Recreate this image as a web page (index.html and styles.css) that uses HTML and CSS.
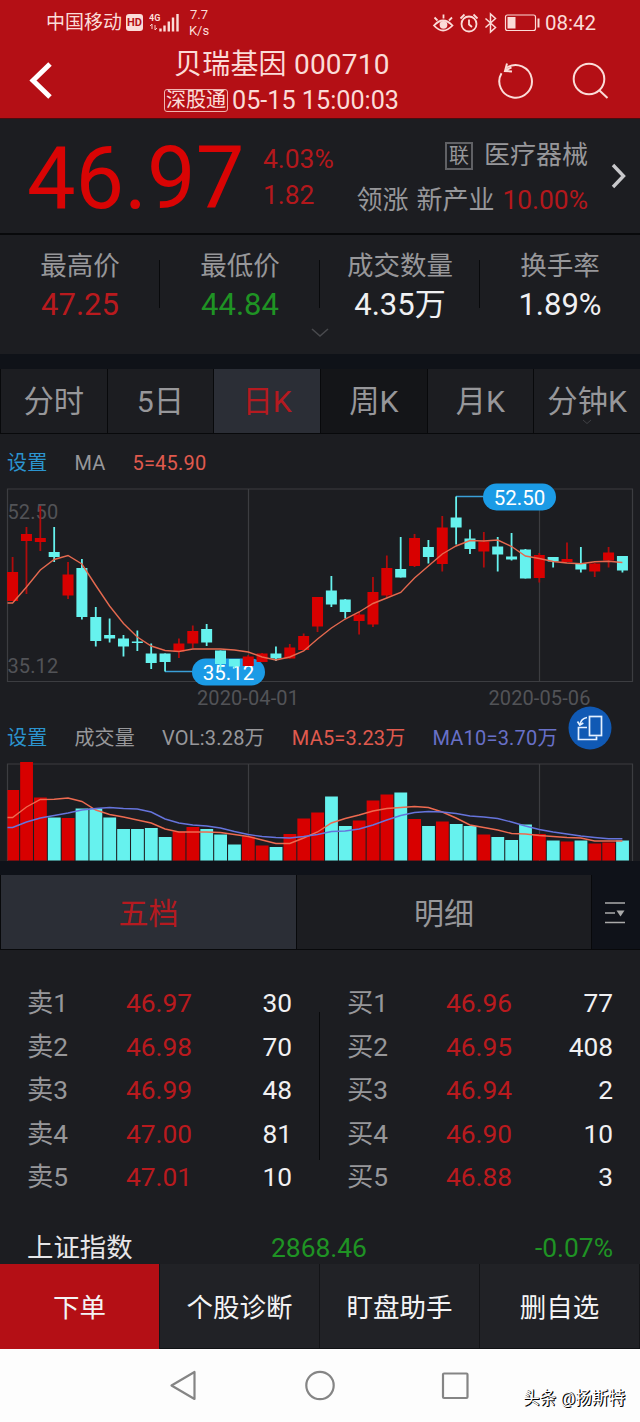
FILE: index.html
```html
<!DOCTYPE html>
<html lang="zh-CN">
<head>
    <meta charset="UTF-8">
    <meta name="viewport" content="width=device-width, initial-scale=1.0">
    <title>贝瑞基因 000710</title>
    <link rel="stylesheet" href="styles.css">
</head>
<body>
    <header class="header">
        <!-- 系统状态栏 -->
        <div class="status">
            <span class="carrier">中国移动</span>
            <span class="hd">HD</span>
            <svg class="signal" width="30" height="22" viewBox="0 0 30 22">
                <text x="0" y="9" class="net">4G</text>
                <path d="M3 12v5M1 14l2-2M6 18v-5M8 16l-2 2" stroke="#f6cfcb" stroke-width="1" fill="none"/>
                <path d="M11.5 19.5v-3M15.5 19.5v-6M19.8 19.5v-10M24 19.5v-14M28.5 19.5v-17.5" stroke="#fbdcd8" stroke-width="2.4" fill="none"/>
            </svg>
            <span class="speed">7.7<br>K/s</span>
            <svg class="sys-icons" width="108" height="24" viewBox="432 10 108 24" fill="none" stroke="#fbdcd8" stroke-width="1.8">
                <path d="M434 24.5Q443 14.5 452.5 24.5Q443 34.5 434 24.5zM434.5 16.5l3 3M443.5 13.5v4M452 16.5l-3 3"/>
                <circle cx="443.5" cy="23.8" r="3" fill="#fbdcd8"/>
                <circle cx="469" cy="23" r="7.5"/>
                <path d="M469 18.5v5l3 2.5M460.5 17.500l4-4M477.5 17.5l-4-4"/>
                <path d="M485.5 17.5l10 9-5 4.5v-18l5 4.5-10 9" stroke-width="1.5"/>
                <rect x="505.5" y="14" width="30" height="15.5" rx="2" stroke-width="1.2"/>
                <rect x="507.5" y="16" width="8" height="11.5" fill="#fbdcd8" stroke="none"/>
                <path d="M538.5 17.5v9" stroke-width="2"/>
            </svg>
            <span class="clock">08:42</span>
        </div>
        <div class="nav">
            <svg width="52" height="60" viewBox="0 50 52 60" fill="none">
                <path d="M50 64L33 80.500L50 97" stroke="#fff" stroke-width="5"/>
            </svg>
            <div class="title">
                <h1>贝瑞基因 000710</h1>
                <p><span class="tag">深股通</span>05-15 15:00:03</p>
            </div>
            <svg width="120" height="60" viewBox="492 50 120 60" fill="none" stroke="#fbdcd8" stroke-width="2">
                <path d="M501.5 73.2A16.3 16.3 0 1 0 507 67.5"/>
                <path d="M511.5 67.3L506 70M507 63.5l-2 7.500 7 .5"/>
                <circle cx="589" cy="79" r="15.3"/>
                <path d="M599.5 90.5l8 7.5"/>
            </svg>
        </div>
    </header>

    <section class="quote">
        <div class="price">46.97</div>
        <div class="change">4.03%<br>1.82</div>
        <div class="sector">
            <p><span class="link-tag">联</span>医疗器械</p>
            <p>领涨 新产业 <em>10.00%</em></p>
        </div>
        <svg class="more" width="18" height="28" viewBox="0 0 18 28"><path d="M3 3l10.500 11L3 25" fill="none" stroke="#c8c8cb" stroke-width="3.4"/></svg>
    </section>

    <section class="stats">
        <div><span>最高价</span><b class="up">47.25</b></div>
        <div><span>最低价</span><b class="down">44.84</b></div>
        <div><span>成交数量</span><b>4.35万</b></div>
        <div><span>换手率</span><b>1.89%</b></div>
        <svg class="expand" width="20" height="12" viewBox="0 0 20 12"><path d="M2 2l8 7 8-7" fill="none" stroke="#48494d" stroke-width="1.6"/></svg>
    </section>

    <nav class="periods">
        <span>分时</span>
        <span>5日</span>
        <span class="active">日K</span>
        <span class="dark">周K</span>
        <span>月K</span>
        <span>分钟K<svg class="caret" width="10" height="6" viewBox="0 0 10 6"><path d="M1 1l4 3.500 4-3.500" fill="none" stroke="#404145"/></svg></span>
    </nav>

    <section class="chart">
        <div class="legend">
            <span class="set">设置</span><span>MA</span><span class="ma5">5=45.90</span>
        </div>
        <svg id="kline" width="640" height="232" viewBox="0 480 640 232"></svg>
        <div class="legend vol">
            <span class="set">设置</span><span>成交量</span><span>VOL:3.28万</span><span class="ma5">MA5=3.23万</span><span class="ma10">MA10=3.70万</span>
            <!-- 横屏切换 -->
            <svg class="rotate" width="44" height="44" viewBox="0 0 44 44" fill="none" stroke="#e4f0ff" stroke-width="1.7">
                <circle cx="22" cy="22" r="21.5" fill="#1059b4" stroke="none"/>
                <rect x="21.5" y="10.5" width="12" height="19"/>
                <path d="M19 21.5h-8.500v12h18v-3M12 18.5q1-6 7-7"/>
                <path d="M9.5 15.5l2.300 3.500 3.500-2"/>
            </svg>
        </div>
        <svg id="volume" width="640" height="101" viewBox="0 760 640 101"></svg>
    </section>

    <nav class="tabs">
        <span class="active">五档</span>
        <span>明细</span>
        <svg width="46" height="74" viewBox="0 0 46 74" stroke="#aaa" stroke-width="1.7">
            <path d="M13 28h20M13 38h10M13 47.5h20"/>
            <path d="M24.500 35.500h8l-4 6z" fill="#aaa" stroke="none"/>
        </svg>
    </nav>

    <section class="book">
        <div class="side">
            <div class="row"><span>卖1</span><i>46.97</i><b>30</b></div>
            <div class="row"><span>卖2</span><i>46.98</i><b>70</b></div>
            <div class="row"><span>卖3</span><i>46.99</i><b>48</b></div>
            <div class="row"><span>卖4</span><i>47.00</i><b>81</b></div>
            <div class="row"><span>卖5</span><i>47.01</i><b>10</b></div>
        </div>
        <div class="side">
            <div class="row"><span>买1</span><i>46.96</i><b>77</b></div>
            <div class="row"><span>买2</span><i>46.95</i><b>408</b></div>
            <div class="row"><span>买3</span><i>46.94</i><b>2</b></div>
            <div class="row"><span>买4</span><i>46.90</i><b>10</b></div>
            <div class="row"><span>买5</span><i>46.88</i><b>3</b></div>
        </div>
    </section>

    <div class="index">
        <span>上证指数</span><span class="down">2868.46</span><span class="down">-0.07%</span>
    </div>

    <footer class="actions">
        <span class="order">下单</span>
        <span>个股诊断</span>
        <span>盯盘助手</span>
        <span>删自选</span>
    </footer>

    <div class="system-nav">
        <svg width="320" height="40" viewBox="160 1366 320 40" fill="none" stroke="#858585" stroke-width="2.2" stroke-linejoin="round">
            <path d="M171.5 1385.5L194.5 1372V1399z"/>
            <circle cx="320" cy="1385.5" r="13.7"/>
            <rect x="443" y="1373.5" width="24.5" height="24.5" rx="1"/>
        </svg>
        <span class="watermark">头条 @扬斯特</span>
    </div>

    <script src="kline.js"></script>
</body>
</html>
```
FILE: styles.css
```css
* {
    box-sizing: border-box;
    margin: 0;
    padding: 0;
}
body {
    width: 640px;
    height: 1422px;
    overflow: hidden;
    display: flex;
    flex-direction: column;
    background: #1c1d21;
    color: #97979a;
    font-family: Roboto, "Noto Sans CJK SC", sans-serif;
    font-size: 26px;
}
svg { display: block; flex: none; }
b, i, em { font-weight: normal; font-style: normal; }
.up { color: #b91a1e; }
.down { color: #1f9324; }

/* 顶部 */
.header {
    height: 119px;
    flex: none;
    background: #b40f15;
    color: #fbdcd8;
    border-bottom: 1px solid #4a0c10;
}
.status {
    height: 45px;
    padding-left: 46px;
    display: flex;
    align-items: center;
    font-size: 19px;
    line-height: 22px;
}
.hd {
    width: 17px;
    height: 17px;
    margin-left: 4px;
    border-radius: 3px;
    background: #fbdcd8;
    color: #b40f15;
    font-size: 11px;
    font-weight: bold;
    line-height: 17px;
    text-align: center;
}
.signal { margin-left: 6px; }
.net { font-size: 9px; font-weight: bold; fill: #fbdcd8; }
.speed {
    width: 22px;
    margin-left: 9px;
    font-size: 13px;
    line-height: 16px;
    text-align: center;
}
.sys-icons { margin-left: 222px; }
.clock { margin-left: 5px; font-size: 20.5px; }
.nav {
    height: 74px;
    display: flex;
    align-items: center;
}
.nav > svg { margin-top: -4px; }
.title {
    width: 236px;
    margin-left: 112px;
    margin-right: 92px;
    white-space: nowrap;
}
.title h1 {
    padding-left: 10px;
    font-size: 28px;
    font-weight: normal;
    line-height: 36px;
    letter-spacing: 0.2px;
}
.title p {
    display: flex;
    align-items: center;
    height: 34px;
    font-size: 25.2px;
}
.tag {
    width: 64px;
    height: 23px;
    margin-right: 4px;
    border: 1px solid #f0b5b0;
    border-radius: 3px;
    font-size: 20px;
    line-height: 20px;
    text-align: center;
}

/* 报价 */
.quote {
    height: 116px;
    flex: none;
    display: flex;
    align-items: center;
    border-bottom: 2px solid #08090b;
}
.price {
    width: 238px;
    padding-left: 27px;
    color: #d90404;
    font-size: 86.5px;
    line-height: 100px;
    margin-top: 6px;
}
.change {
    width: 82px;
    margin-left: 25px;
    margin-top: 2px;
    color: #b3181c;
    font-size: 26.4px;
    line-height: 36px;
}
.sector {
    width: 243px;
    margin-top: 4px;
    text-align: right;
    line-height: 45px;
    white-space: nowrap;
}
.sector p { display: flex; justify-content: flex-end; align-items: center; white-space: pre; word-spacing: 1.5px; }
.sector em { color: #b3181c; font-size: 26.4px; }
.link-tag {
    width: 28px;
    height: 28px;
    margin-right: 11px;
    border: 2px solid #606165;
    font-size: 20px;
    line-height: 24px;
    text-align: center;
}
.more { margin-left: 22px; }

/* 统计 */
.stats {
    position: relative;
    height: 134px;
    flex: none;
    display: flex;
    padding-top: 11px;
    border-bottom: 15px solid #0f1218;
}
.stats div {
    width: 160px;
    height: 80px;
    display: flex;
    flex-direction: column;
    align-items: center;
    font-size: 26.5px;
    line-height: 39px;
    background: linear-gradient(#08090b, #08090b) no-repeat right 14px / 1px 48px;
}
.stats div:nth-child(4) { background: none; }
.stats b { font-size: 31px; color: #f0f0f2; }
.stats b.up { color: #b91a1e; }
.stats b.down { color: #1f9324; }
.expand { position: absolute; left: 310px; top: 92px; }

/* 周期 */
.periods {
    height: 65px;
    flex: none;
    display: grid;
    grid-template-columns: repeat(6, 1fr);
    border-bottom: 1px solid #08090b;
    font-size: 30.3px;
    line-height: 66px;
    text-align: center;
}
.periods span { position: relative; height: 64px; border-left: 1px solid #08090b; white-space: nowrap; }
.periods .active, .tabs .active { background: #2b2e36; color: #b51a20; }
.periods .dark { background: #141518; }
.caret { position: absolute; left: 48px; bottom: 8px; }

/* 图表 */
.legend {
    height: 46px;
    display: flex;
    padding: 6px 0 0 7px;
    gap: 27px;
    font-size: 20px;
    letter-spacing: 0.2px;
    line-height: 46px;
    white-space: nowrap;
}
.legend .set { color: #2b94cf; }
.legend .ma5 { color: #e05a4e; }
.legend .ma10 { color: #6870c8; }
.vol { height: 48px; padding-top: 3px; position: relative; }
.rotate { position: absolute; left: 568px; top: -6px; }
.chart { flex: none; }
.axis { font-size: 20px; fill: #525357; letter-spacing: 0.1px; }
.pill { font-size: 20.5px; fill: #fff; text-anchor: middle; }

/* 五档 / 明细 */
.tabs {
    height: 89px;
    flex: none;
    display: flex;
    background: #0f1219;
    border-top: 14px solid #0f1219;
    border-bottom: 1px solid #08090b;
    font-size: 30px;
    line-height: 77px;
    text-align: center;
}
.tabs span { width: 296px; background: #1c1d21; border: solid #08090b; border-width: 0 0 0 1px; }
.tabs span + span { border-right-width: 1px; }
.book {
    height: 275px;
    flex: none;
    display: flex;
    padding-top: 32px;
    background: linear-gradient(#08090b, #08090b) no-repeat 319px 62px / 1px 148px;
}
.side { width: 320px; padding: 0 28px 0 27px; }
.side + .side { padding: 0 27px; }
.row {
    display: grid;
    grid-template-columns: 99px 1fr 1fr;
    height: 43.6px;
    font-size: 26.3px;
    line-height: 43.6px;
}
.row i { color: #b91a1e; }
.row b { color: #f0f0f2; text-align: right; }
.index {
    height: 39px;
    flex: none;
    display: grid;
    grid-template-columns: 244px 1fr 1fr;
    padding: 0 27px;
    font-size: 26.4px;
    line-height: 46px;
}
.index span:first-child { color: #e6e6e8; }
.index span:last-child { text-align: right; }

/* 底部 */
.actions {
    height: 85px;
    flex: none;
    display: grid;
    grid-template-columns: repeat(4, 1fr);
    border-bottom: 1px solid #101114;
    background: #212226;
    color: #f4f4f5;
    font-size: 26.5px;
    line-height: 87px;
    text-align: center;
}
.actions span { height: 84px; border-right: 1px solid #131417; }
.actions .order { height: 85px; background: #b40f15; }
.system-nav {
    flex: 1;
    display: flex;
    align-items: center;
    padding-left: 160px;
    background: #fdfdfd;
}
.watermark {
    margin: 26px 0 0 43px;
    color: #fff;
    font-size: 16.6px;
    line-height: 24px;
    white-space: nowrap;
    text-shadow: 1px 1px 0 #000, 1px 0 0 #222;
}
```
FILE: kline.js
```js
const RED = '#d80000';
const CYAN = '#66f2ee';
const STEP = 13.86;
const X0 = 12.6;

// 颜色, 最高, 实体上沿, 实体下沿, 最低, 成交量上沿
const candles = [
    ['r', 557, 572, 601, 601, 790],
    ['r', 527, 534, 541, 594, 762],
    ['r', 506, 538, 542, 551, 797.5],
    ['c', 527, 552, 557, 562, 817.5],
    ['r', 562, 574.5, 595.5, 599, 818],
    ['c', 559, 568, 617, 619.5, 808.5],
    ['c', 607, 617, 641, 646.5, 808.5],
    ['c', 618.5, 635, 638.5, 642.5, 817.5],
    ['c', 635, 638.5, 646.5, 656.5, 829],
    ['c', 630.5, 641.5, 643, 651, 829],
    ['c', 643.5, 653.5, 663, 669, 828],
    ['c', 653.5, 653.5, 662, 671.5, 837],
    ['r', 638.5, 643.5, 651.5, 658, 831.5],
    ['r', 625.5, 631, 643.5, 648, 827],
    ['c', 624, 629, 642.5, 646, 829],
    ['c', 650.5, 650.5, 664, 670, 834.5],
    ['c', 659, 659, 666.5, 668, 844.5],
    ['r', 655, 656.5, 666, 666, 836.5],
    ['r', 653, 653.5, 662, 662, 845.5],
    ['c', 646.5, 653.5, 658.5, 661, 847],
    ['r', 644, 647.5, 658.5, 658.5, 834],
    ['r', 633.5, 636, 650, 650, 818.5],
    ['r', 597, 597, 626.5, 632, 812.5],
    ['c', 576, 590.5, 604.5, 607, 796.5],
    ['c', 599, 599.5, 612, 618.5, 826],
    ['r', 612, 614.5, 621, 634.5, 820.5],
    ['r', 577, 592, 624.5, 627, 800.5],
    ['r', 555.5, 568, 595.5, 597.5, 794.5],
    ['c', 537, 569, 577.5, 577.5, 792.5],
    ['r', 534, 538, 566, 567, 819],
    ['c', 540, 547, 557, 563.5, 826],
    ['r', 516, 527.5, 564, 571.5, 821.5],
    ['c', 496.5, 517.5, 527.5, 544.5, 824],
    ['c', 529.5, 538.5, 549, 554, 826],
    ['r', 532, 541.5, 551.5, 567.5, 834.5],
    ['c', 537, 546.5, 554.5, 571.5, 837],
    ['c', 533, 556.5, 559.5, 560.5, 840],
    ['c', 549, 549.5, 578.5, 578.5, 824.5],
    ['r', 553, 555, 578, 582.5, 834],
    ['c', 557, 557, 561.5, 567.5, 840.5],
    ['r', 542.5, 559, 562, 562, 841.5],
    ['c', 547, 563.5, 569.5, 572.5, 840.5],
    ['r', 563, 563.5, 571.5, 577, 843.5],
    ['r', 547, 552.5, 560.5, 567.5, 842.5],
    ['c', 556, 556, 570.5, 572.5, 840.5]
];
const ma = [603, 587, 570, 559.5, 555.5, 564, 585.5, 606, 623.5, 637, 646, 650.5, 651.5, 649, 649,
    649, 650, 652, 657, 660, 657, 651, 639, 628, 619, 612, 603.5, 598, 592.5, 578,
    566, 554, 546, 540.5, 541, 540, 546.5, 556, 558.5, 561.5, 563, 563.8, 561.8, 561.3, 562.5];
const vol5 = [817.5, 807, 799.5, 799.3, 798, 801.5, 810, 814.5, 817, 820, 823, 829, 832, 832, 832,
    832.5, 834.5, 836.5, 840, 843.5, 843.5, 838, 832, 823, 818.5, 815, 811, 808.5, 807.5, 806.5,
    807.5, 812, 818, 825, 827.5, 830, 833.5, 834, 835.5, 836.5, 837.5, 838, 841, 841, 841];
const vol10 = [827.5, 822, 818, 815.5, 813, 810, 808.5, 807.5, 808.5, 809, 812, 819, 823, 825, 826,
    828, 831.5, 834.5, 836.5, 837.5, 838, 836.5, 834.5, 831.5, 831, 829, 825, 820, 815.5, 812.5,
    811.5, 812, 813.5, 816, 817, 818.5, 822, 826, 829.5, 832, 834, 836, 837.5, 838.8, 838.8];

const cx = i => X0 + i * STEP;

function line(data, color) {
    const points = data.map((y, i) => cx(i).toFixed(1) + ',' + y).join(' ');
    return `<polyline points="7.5,${data[0]} ${points}" fill="none" stroke="${color}" stroke-width="1.4"/>`;
}

function pill(x, y, text) {
    return `<rect x="${x}" y="${y}" width="73" height="27" rx="13.5" fill="#1b9be6"/>
        <text class="pill" x="${x + 36.5}" y="${y + 21}">${text}</text>`;
}

// K线
let k = '<path d="M7.5 489H632.5V681.5H7.5zM248.5 489V681M539.5 489V681" fill="none" stroke="#3c3d41" stroke-width="1.2"/>';
k += '<text class="axis" x="7.5" y="519">52.50</text><text class="axis" x="7.5" y="673">35.12</text>';
k += '<text class="axis" x="248" y="705" text-anchor="middle">2020-04-01</text><text class="axis" x="539.5" y="705" text-anchor="middle">2020-05-06</text>';
k += '<path d="M165 671.5H195M456 496.5H486" stroke="#3a9fd8" stroke-width="1.5"/>';
k += pill(192, 658.5, '35.12') + pill(483, 483.5, '52.50');
candles.forEach(([c, high, top, bottom, low], i) => {
    const color = c === 'r' ? RED : CYAN;
    const x = cx(i);
    k += `<rect x="${x - 0.9}" y="${high}" width="1.8" height="${low - high}" fill="${c === 'r' ? '#b00c0c' : CYAN}"/>`;
    k += `<rect x="${x - 5.5}" y="${top}" width="11" height="${bottom - top}" fill="${color}"/>`;
});
k += line(ma, '#e5694f');
document.getElementById('kline').innerHTML = k;

// 成交量
let v = '<path d="M7.5 861V764H632.5V861M248.5 764V861M539.5 764V861" fill="none" stroke="#3c3d41" stroke-width="1.2"/>';
candles.forEach((row, i) => {
    const left = Math.max(7.5, cx(i) - 6.3);
    v += `<rect x="${left}" y="${row[5]}" width="${cx(i) + 6.5 - left}" height="${860.5 - row[5]}" fill="${row[0] === 'r' ? RED : CYAN}"/>`;
});
v += line(vol5, '#ee6a50') + line(vol10, '#6674dc');
document.getElementById('volume').innerHTML = v;
```
